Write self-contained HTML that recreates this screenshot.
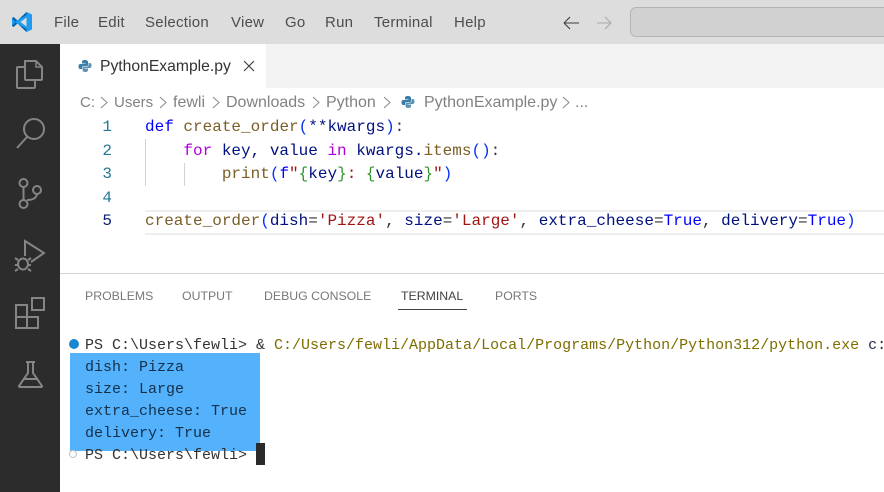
<!DOCTYPE html>
<html><head><meta charset="utf-8">
<style>
html,body{margin:0;padding:0;width:884px;height:492px;overflow:hidden;background:#fff}
.a{position:absolute;white-space:pre}
.m{font-family:"Liberation Sans",sans-serif;font-size:15px;letter-spacing:.25px;color:#4d4d4d;top:14px;line-height:18px}
.c{font-family:"Liberation Mono",monospace;font-size:16px;line-height:23px;left:145px;color:#001080}
.n{font-family:"Liberation Mono",monospace;font-size:16px;line-height:23px;color:#237893;width:20px;text-align:right;left:92px}
.t{font-family:"Liberation Mono",monospace;font-size:15px;line-height:22px;left:85px;color:#333}
.p{font-family:"Liberation Sans",sans-serif;font-size:12.3px;color:#787878;top:288px;line-height:16px}
.b{font-family:"Liberation Sans",sans-serif;font-size:16px;color:#828282;top:94px;line-height:18px}
.k{color:#af00db}.d{color:#0000ff}.f{color:#795e26}.s{color:#a31515}.br{color:#0431fa}.g{color:#319331}.bk{color:#333}
</style></head>
<body>
<div class="a" style="left:0;top:0;width:884px;height:44px;background:#dddddd"></div>
<svg class="a" style="left:11px;top:11px" width="22" height="22" viewBox="0 0 22 22"><path d="M15.5 1L21 3.5V18.5L15.5 21L6.5 12.5L2.5 16L1 14.8V7.2L2.5 6L6.5 9.5Z" fill="#1f9cf0"/><path d="M15.5 6.5L9.5 11L15.5 15.5Z" fill="#dddddd"/><path d="M1 7.2L2.5 6L6.5 9.5L15.5 1V4L3.5 11L15.5 18V21L6.5 12.5L2.5 16L1 14.8L4.5 11Z" fill="#0065a9"/></svg>
<div class="a m" style="left:54px">File</div>
<div class="a m" style="left:98px">Edit</div>
<div class="a m" style="left:145px">Selection</div>
<div class="a m" style="left:231px">View</div>
<div class="a m" style="left:285px">Go</div>
<div class="a m" style="left:325px">Run</div>
<div class="a m" style="left:374px">Terminal</div>
<div class="a m" style="left:454px">Help</div>
<svg class="a" style="left:560px;top:12px" width="60" height="22" viewBox="0 0 60 22"><path d="M4 11H19M4 11L10 5M4 11L10 17" stroke="#3b3b3b" stroke-width="1.1" fill="none"/><path d="M37 11H51M51 11L45 5M51 11L45 17" stroke="#a9a9a9" stroke-width="1.1" fill="none"/></svg>
<div class="a" style="left:630px;top:7px;width:270px;height:28px;background:#d1d1d1;border:1px solid #b5b5b5;border-radius:6px"></div>

<div class="a" style="left:0;top:44px;width:60px;height:448px;background:#2c2c2c"></div>
<svg class="a" style="left:0;top:44px" width="60" height="360" viewBox="0 0 60 360" fill="none" stroke="#858585" stroke-width="2">
<path d="M25 17H36L42 23V35Q42 36 41 36H26Q25 36 25 35Z"/><path d="M25 23H18Q17 23 17 24V43Q17 44 18 44H34Q35 44 35 43V36"/><path d="M36 17V23H42" stroke-width="1.5"/>
<circle cx="34" cy="85" r="10"/><path d="M27 93L17 104"/>
<circle cx="23.500" cy="139" r="4"/><circle cx="23.500" cy="160" r="4"/><circle cx="37" cy="146" r="4"/><path d="M23.500 143V156M37 150Q36 156 27 156"/>
<path d="M25 212V197L44 209L31 218"/><ellipse cx="23" cy="220" rx="5" ry="5.500"/><path d="M15 214L18 216M31 214L28 216M15 221H18M31 221H28M15 227L18 225M31 227L28 225"/>
<path d="M32 254H44V266H32Z"/><path d="M16 261H27V284H16ZM16 273H38V284H27"/><path d="M27 261V273M27 273H38V284"/>
<path d="M26 318H35M28 318V329L19 342Q19 343 20 343H41Q42 343 42 342L33 329V318M23 335H38"/>
</svg>

<div class="a" style="left:60px;top:44px;width:824px;height:44px;background:#f3f3f3"></div>
<div class="a" style="left:60px;top:44px;width:206px;height:44px;background:#fff"></div>
<svg class="a" style="left:78px;top:59px" width="14" height="14" viewBox="0 0 14 14"><path d="M7 1C4.500 1 4 2 4 3V4.500H7.500V5H2.500C1 5 .5 6 .5 7.500S1 10 2.500 10H4V8.500C4 7.500 4.800 7 6 7H9C10 7 10 6 10 5.500V3C10 2 9 1 7 1Z" fill="#3b7fa8"/><path d="M7 13C9.500 13 10 12 10 11V9.500H6.500V9H11.500C13 9 13.500 8 13.500 6.500S13 4 11.500 4H10.500V5.800C10.500 6.800 9.800 7.500 8.800 7.500H6C5 7.500 4.500 8 4.500 8.800V11C4.500 12 5.500 13 7 13Z" fill="#5c93b3"/></svg>
<div class="a" style="left:100px;top:58px;font:15.700px/18px 'Liberation Sans',sans-serif;color:#333">PythonExample.py</div>
<svg class="a" style="left:242px;top:59px" width="14" height="14" viewBox="0 0 14 14"><path d="M2 2L12 12M12 2L2 12" stroke="#424242" stroke-width="1.2"/></svg>

<div class="a b" style="left:80px;font-size:15px">C:</div>
<div class="a b" style="left:114px;font-size:15px">Users</div>
<div class="a b" style="left:173px">fewli</div>
<div class="a b" style="left:226px">Downloads</div>
<div class="a b" style="left:326px">Python</div>
<svg class="a" style="left:401px;top:95px" width="14" height="14" viewBox="0 0 14 14"><path d="M7 1C4.500 1 4 2 4 3V4.500H7.500V5H2.500C1 5 .5 6 .5 7.500S1 10 2.500 10H4V8.500C4 7.500 4.800 7 6 7H9C10 7 10 6 10 5.500V3C10 2 9 1 7 1Z" fill="#3b7fa8"/><path d="M7 13C9.500 13 10 12 10 11V9.500H6.500V9H11.500C13 9 13.500 8 13.500 6.500S13 4 11.500 4H10.500V5.800C10.500 6.800 9.800 7.500 8.800 7.500H6C5 7.500 4.500 8 4.500 8.800V11C4.500 12 5.500 13 7 13Z" fill="#5c93b3"/></svg>
<div class="a b" style="left:424px">PythonExample.py</div>
<div class="a b" style="left:575px">...</div>
<svg class="a" style="left:0;top:94px" width="600" height="18" viewBox="0 0 600 18" fill="none" stroke="#8a8a8a" stroke-width="1"><path d="M101 3L107 8.500L101 14M160 3L166 8.500L160 14M213 3L219 8.500L213 14M313 3L319 8.500L313 14M384 3L390 8.500L384 14M563 3L569 8.500L563 14"/></svg>

<div class="a n" style="top:116px">1</div>
<div class="a n" style="top:140px">2</div>
<div class="a n" style="top:163px">3</div>
<div class="a n" style="top:187px">4</div>
<div class="a n" style="top:210px;color:#0b216f">5</div>
<div class="a" style="left:145px;top:139px;width:1px;height:47px;background:#d3d3d3"></div>
<div class="a" style="left:184px;top:163px;width:1px;height:23px;background:#d3d3d3"></div>
<div class="a" style="left:145px;top:210px;width:739px;height:21px;border-top:2px solid #eeeeee;border-bottom:2px solid #eeeeee"></div>
<div class="a c" style="top:116px"><span class="d">def</span> <span class="f">create_order</span><span class="br">(</span>**kwargs<span class="br">)</span><span class="bk">:</span></div>
<div class="a c" style="top:140px">    <span class="k">for</span> key, value <span class="k">in</span> kwargs.<span class="f">items</span><span class="br">()</span><span class="bk">:</span></div>
<div class="a c" style="top:163px">        <span class="f">print</span><span class="br">(</span><span class="d">f</span><span class="s">"</span><span class="g">{</span>key<span class="g">}</span><span class="s">: </span><span class="g">{</span>value<span class="g">}</span><span class="s">"</span><span class="br">)</span></div>
<div class="a c" style="top:210px"><span class="f">create_order</span><span class="br">(</span>dish<span class="bk">=</span><span class="s">'Pizza'</span><span class="bk">,</span> size<span class="bk">=</span><span class="s">'Large'</span><span class="bk">,</span> extra_cheese<span class="bk">=</span><span class="d">True</span><span class="bk">,</span> delivery<span class="bk">=</span><span class="d">True</span><span class="br">)</span></div>

<div class="a" style="left:60px;top:273px;width:824px;height:1px;background:#d4d4d4"></div>
<div class="a p" style="left:85px">PROBLEMS</div>
<div class="a p" style="left:182px">OUTPUT</div>
<div class="a p" style="left:264px">DEBUG CONSOLE</div>
<div class="a p" style="left:401px;color:#424242">TERMINAL</div>
<div class="a p" style="left:495px">PORTS</div>
<div class="a" style="left:398px;top:309px;width:69px;height:1px;background:#424242"></div>

<div class="a" style="left:69px;top:339px;width:10px;height:10px;border-radius:50%;background:#1a85d0"></div>
<div class="a" style="left:70px;top:353px;width:190px;height:98px;background:#53b2fb"></div>
<div class="a" style="left:69px;top:450px;width:6px;height:6px;border-radius:50%;border:1.500px solid #c4c4c4;background:#fff"></div>
<div class="a" style="left:256px;top:443px;width:9px;height:22px;background:#2a2a2a"></div>
<div class="a t" style="top:335px">PS C:\Users\fewli&gt; &amp; <span style="color:#7d6e00">C:/Users/fewli/AppData/Local/Programs/Python/Python312/python.exe</span> <span style="color:#1f2a4d">c:</span></div>
<div class="a t" style="top:357px;color:#15304a">dish: Pizza</div>
<div class="a t" style="top:379px;color:#15304a">size: Large</div>
<div class="a t" style="top:401px;color:#15304a">extra_cheese: True</div>
<div class="a t" style="top:423px;color:#15304a">delivery: True</div>
<div class="a t" style="top:445px">PS C:\Users\fewli&gt;</div>
</body></html>
